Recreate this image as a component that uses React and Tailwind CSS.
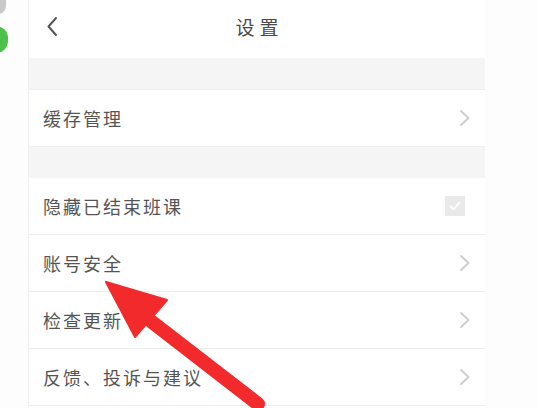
import React from "react";

const font = { fontFamily: '"Noto Sans CJK SC", "Noto Sans", sans-serif' };

function Chevron() {
  return (
    <svg width="12" height="18" viewBox="0 0 12 18" className="shrink-0">
      <path d="M2 2 L9.5 9 L2 16" fill="none" stroke="#cfcfcf" strokeWidth="2" strokeLinecap="round" strokeLinejoin="round" />
    </svg>
  );
}

function Row({ label, right, last }) {
  return (
    <div className={`h-[57px] shrink-0 flex items-center justify-between pl-[14px] pr-[14px] ${last ? "" : "border-b border-[#eeeeee]"}`}>
      <span className="text-[18px] tracking-[2px] text-[#555555]">{label}</span>
      {right}
    </div>
  );
}

function CheckBox() {
  return (
    <div className="w-[20px] h-[20px] mr-[6px] bg-[#e9e9e9] flex items-center justify-center">
      <svg width="14" height="14" viewBox="0 0 14 14">
        <path d="M2.5 7.5 L5.5 10.5 L11.5 3.5" fill="none" stroke="#ffffff" strokeWidth="1.8" strokeLinecap="round" strokeLinejoin="round" />
      </svg>
    </div>
  );
}

export default function App() {
  return (
    <div className="relative w-[537px] h-[408px] overflow-hidden bg-[#fdfdfd] flex" style={font}>
      <div className="relative w-[28px] shrink-0">
        <div className="absolute left-[-10px] top-[-8px] w-[16px] h-[22px] rounded-full bg-[#c9c9c9]" />
        <div className="absolute left-[-16px] top-[26px] w-[24px] h-[27px] rounded-full bg-[#4cc04a]" />
      </div>
      <div className="w-[457px] shrink-0 bg-white border-l border-[#f0f0f0] flex flex-col">
        <div className="h-[58px] shrink-0 flex items-center relative px-[14px]">
          <svg width="14" height="22" viewBox="0 0 14 22" className="ml-[3px] mt-[-4px]">
            <path d="M10 2 L2.5 10.5 L10 19" fill="none" stroke="#555555" strokeWidth="2" strokeLinecap="round" strokeLinejoin="round" />
          </svg>
          <div className="flex-1 text-center text-[19px] tracking-[5px] text-[#4a4a4a] mr-[17px] mt-[-4px] pl-[5px]">设置</div>
        </div>
        <div className="h-[32px] shrink-0 bg-[#f5f5f5] border-b border-[#efefef]" />
        <div className="h-[56px] shrink-0 flex items-center justify-between pl-[14px] pr-[14px]">
          <span className="text-[18px] tracking-[2px] text-[#555555]">缓存管理</span>
          <Chevron />
        </div>
        <div className="h-[32px] shrink-0 bg-[#f5f5f5] border-t border-[#efefef]" />
        <Row label="隐藏已结束班课" right={<CheckBox />} />
        <Row label="账号安全" right={<Chevron />} />
        <Row label="检查更新" right={<Chevron />} />
        <Row label="反馈、投诉与建议" right={<Chevron />} />
        <Row label="" right={null} last />
      </div>
      <div className="flex-1" />
      <svg className="absolute left-0 top-0 pointer-events-none" width="537" height="408" viewBox="0 0 537 408">
        <line x1="152" y1="322" x2="258" y2="404" stroke="#f22a2c" strokeWidth="14" strokeLinecap="round" />
        <polygon points="106,282 167,300 135,337" fill="#f22a2c" stroke="#f22a2c" strokeWidth="2" strokeLinejoin="round" />
      </svg>
    </div>
  );
}
